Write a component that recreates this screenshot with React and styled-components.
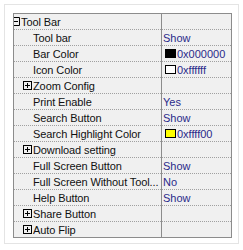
import React from 'react'
import styled, { createGlobalStyle } from 'styled-components'

const Global = createGlobalStyle`
    body {
        margin: 0;
        background: #ffffff;
        font-family: "Liberation Sans", Arial, sans-serif;
    }
`

const Frame = styled.div`
    box-sizing: border-box;
    margin: 4px 0 0 4px;
    width: 235px;
    height: 240px;
    border: 1px solid #e4e4e4;
    padding: 8px 0 0 8px;
`

const Grid = styled.div`
    width: 217px;
    border: 1px solid #8c8c8c;
    background: #f0f0f0;
`

const Row = styled.div`
    display: grid;
    grid-template-columns: 147px 1px 69px;
    height: 15px;
    border-bottom: 1px dotted #a0a0a0;
    &:last-child {
        border-bottom: none;
    }
`

const Name = styled.div`
    display: flex;
    align-items: center;
    padding-left: ${(p) => p.$indent}px;
    font-size: 11px;
    line-height: 15px;
    letter-spacing: -0.1px;
    color: #111111;
    white-space: nowrap;
    overflow: hidden;
`

const Label = styled.span`
    white-space: nowrap;
    padding-top: 1px;
`

const Divider = styled.div`
    background: #8c8c8c;
    margin-bottom: -1px;
`

const Value = styled.div`
    display: flex;
    align-items: center;
    padding-left: 1px;
    font-size: 11px;
    line-height: 15px;
    color: #2a2a8a;
    white-space: nowrap;
    overflow: hidden;
`

const Swatch = styled.span`
    box-sizing: border-box;
    width: 11px;
    height: 9px;
    margin: 0 1px 0 2px;
    border: 1px solid #000000;
    background: ${(p) => p.$color};
`

const Toggle = styled.svg`
    flex: none;
    margin-right: 1px;
`

const Minus = () => (
    <Toggle width="6" height="9" viewBox="0 0 6 9">
        <path d="M0 0.5H5.5V8.5H0M0 4.5H4" stroke="#000" strokeWidth="1" fill="none" />
    </Toggle>
)

const Plus = () => (
    <Toggle width="9" height="9" viewBox="0 0 9 9">
        <rect x="0.5" y="0.5" width="8" height="8" stroke="#000" fill="none" />
        <path d="M2 4.5H7M4.5 2V7" stroke="#000" />
    </Toggle>
)

const rows = [
    { type: 'open', name: 'Tool Bar' },
    { name: 'Tool bar', value: 'Show' },
    { name: 'Bar Color', value: '0x000000', color: '#000000' },
    { name: 'Icon Color', value: '0xffffff', color: '#ffffff' },
    { type: 'closed', name: 'Zoom Config' },
    { name: 'Print Enable', value: 'Yes' },
    { name: 'Search Button', value: 'Show' },
    { name: 'Search Highlight Color', value: '0xffff00', color: '#ffff00' },
    { type: 'closed', name: 'Download setting' },
    { name: 'Full Screen Button', value: 'Show' },
    { name: 'Full Screen Without Tool...', value: 'No' },
    { name: 'Help Button', value: 'Show' },
    { type: 'closed', name: 'Share Button' },
    { type: 'closed', name: 'Auto Flip' },
]

const indentFor = (type) => {
    if (type === 'open') return 0
    if (type === 'closed') return 9
    return 19
}

const App = () => {
    return (
        <>
            <Global />
            <Frame>
                <Grid>
                    {rows.map((row) => (
                        <Row key={row.name}>
                            <Name $indent={indentFor(row.type)}>
                                {row.type === 'open' && <Minus />}
                                {row.type === 'closed' && <Plus />}
                                <Label>{row.name}</Label>
                            </Name>
                            <Divider />
                            <Value>
                                {row.color && <Swatch $color={row.color} />}
                                {row.value && <Label>{row.value}</Label>}
                            </Value>
                        </Row>
                    ))}
                </Grid>
            </Frame>
        </>
    )
}

export default App
